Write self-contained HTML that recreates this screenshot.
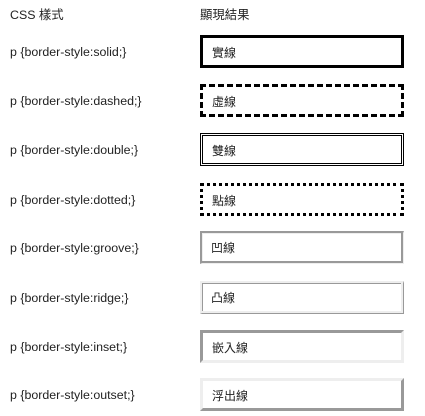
<!DOCTYPE html>
<html><head><meta charset="utf-8"><style>
body{margin:0;width:425px;height:416px;background:#fff;font-family:"Liberation Sans","Noto Sans CJK TC",sans-serif;font-size:12.4px;color:#222;position:relative;overflow:hidden}
.l{position:absolute;left:10px;white-space:nowrap}
.b{position:absolute;left:200px;width:204px;height:33px;box-sizing:border-box;padding-left:9px;line-height:30px;font-size:12px}
</style></head><body>
<div class="l" style="top:5px">CSS 樣式</div>
<div class="l" style="left:200px;top:5px">顯現結果</div>

<div class="l" style="top:45px">p {border-style:solid;}</div>
<div class="b" style="top:35px;border:3px solid #000">實線</div>

<div class="l" style="top:94px">p {border-style:dashed;}</div>
<div class="b" style="top:84px;border:3px dashed #000">虛線</div>

<div class="l" style="top:143px">p {border-style:double;}</div>
<div class="b" style="top:133px;border:3px double #000">雙線</div>

<div class="l" style="top:193px">p {border-style:dotted;}</div>
<div class="b" style="top:183px;border:3px dotted #000">點線</div>

<div class="l" style="top:241px">p {border-style:groove;}</div>
<div class="b" style="top:231px;border-style:solid;border-width:2px 1px 1px 2px;border-color:#999 #eee #eee #999;box-shadow:inset -2px -2px 0 #999, inset 1px 1px 0 #eee">凹線</div>

<div class="l" style="top:291px">p {border-style:ridge;}</div>
<div class="b" style="top:281px;border-style:solid;border-width:2px 1px 1px 2px;border-color:#eee #999 #999 #eee;box-shadow:inset -2px -2px 0 #eee, inset 1px 1px 0 #999">凸線</div>

<div class="l" style="top:340px">p {border-style:inset;}</div>
<div class="b" style="top:330px;border:3px solid;border-color:#999 #eee #eee #999">嵌入線</div>

<div class="l" style="top:388px">p {border-style:outset;}</div>
<div class="b" style="top:378px;border:3px solid;border-color:#eee #999 #999 #eee">浮出線</div>
</body></html>
